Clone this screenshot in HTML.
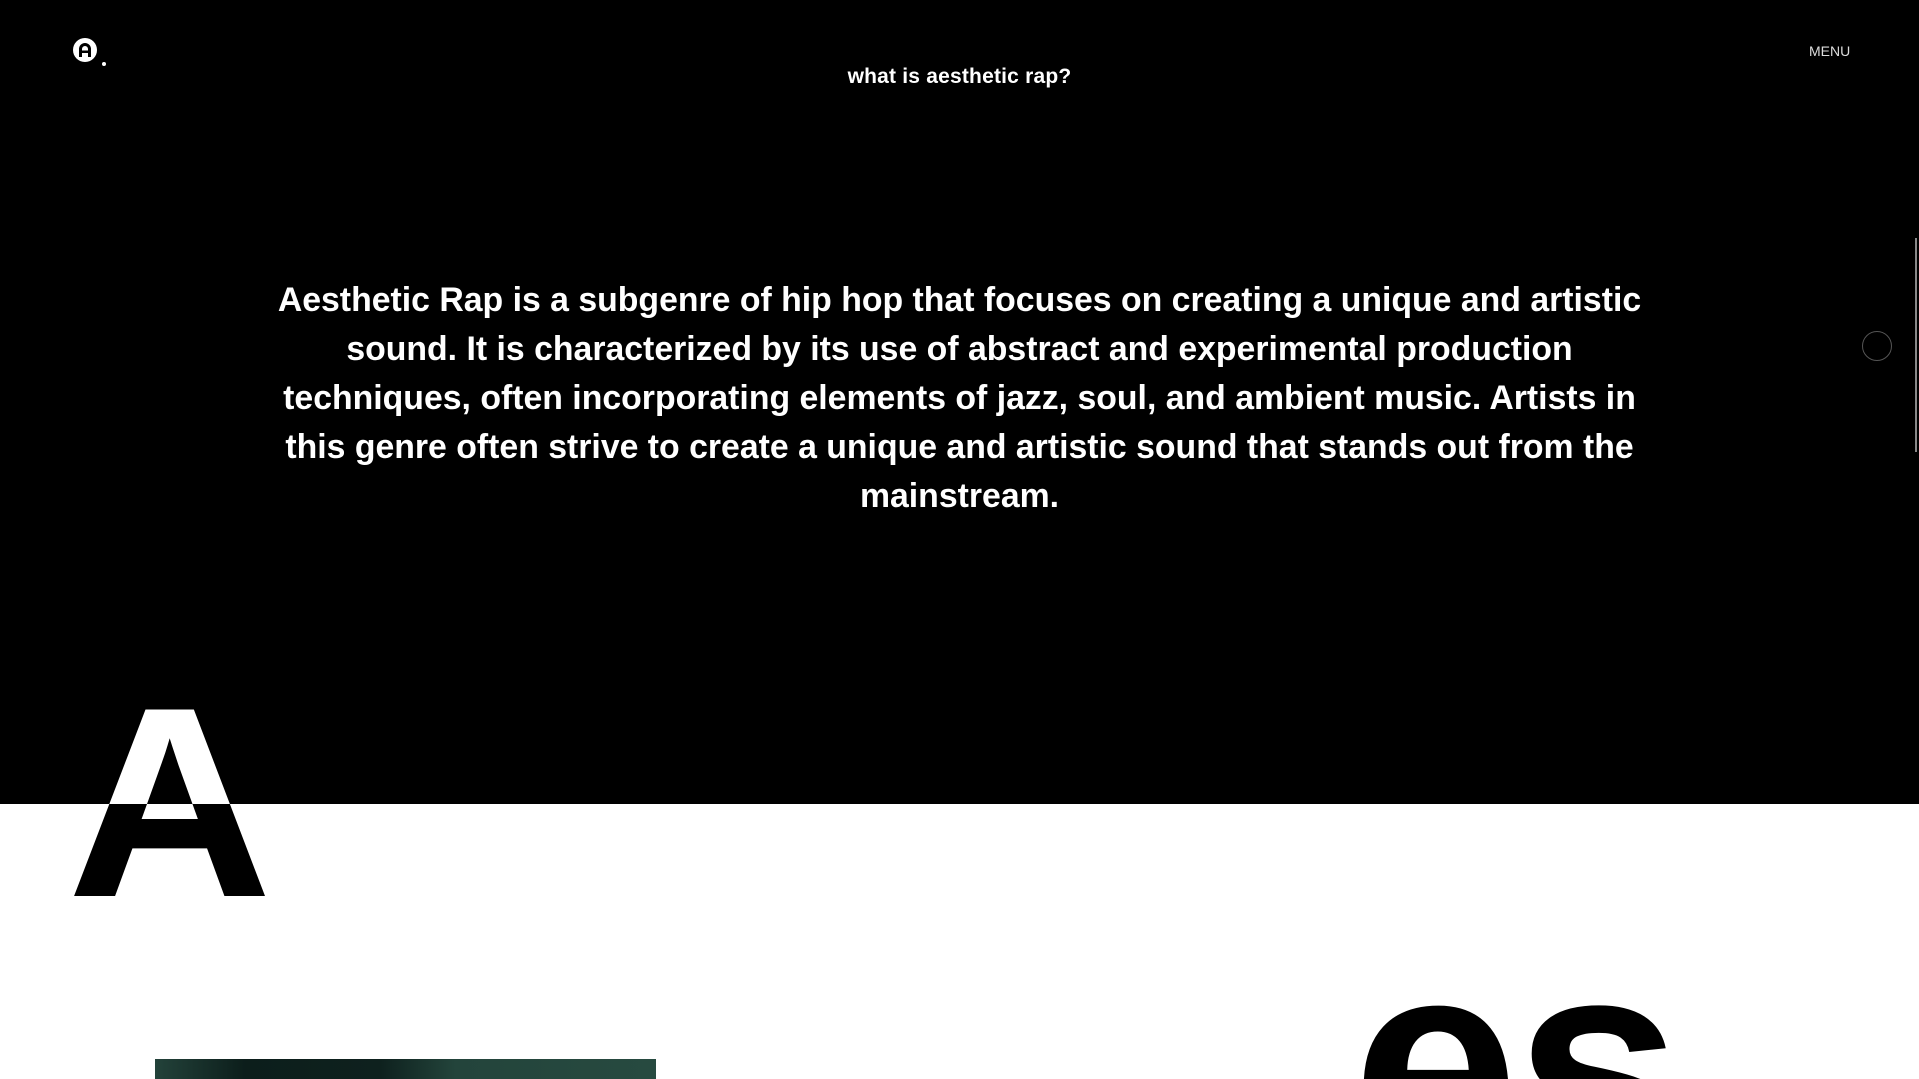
<!DOCTYPE html>
<html><head><meta charset="utf-8"><style>
*{margin:0;padding:0;box-sizing:border-box}
html,body{width:1919px;height:1079px;overflow:hidden;background:#fff;font-family:"Liberation Sans",sans-serif}
.wrap{position:relative;width:1919px;height:1079px;overflow:hidden;background:#fff}
.black{position:absolute;left:0;top:0;width:1919px;height:804px;background:#000}
.logo{position:absolute;left:73px;top:38px}
.title{position:absolute;left:0;width:1919px;top:65px;text-align:center;color:#fff;font-weight:bold;font-size:21px;letter-spacing:0.2px}
.menu{position:absolute;left:1809px;top:43px;color:#ddd;font-size:14px}
.para{position:absolute;left:267px;width:1385px;top:276px;text-align:center;color:#fff;font-weight:bold;font-size:33.8px;line-height:49px;letter-spacing:0}
.ring{position:absolute;left:1862px;top:331px;width:30px;height:30px;border-radius:50%;border:1px solid #555}
.sb{position:absolute;left:1915px;top:238px;width:2px;height:214px;background:#888}
.bigA{position:absolute;left:67px;top:668px;font-size:271px;font-weight:bold;color:#fff;mix-blend-mode:difference;line-height:1;transform:scaleX(1.05);transform-origin:left}
.esclip{position:absolute;left:1300px;top:900px;width:500px;height:179px;overflow:hidden}
.es{position:absolute;left:52px;top:13px;font-size:300px;font-weight:bold;color:#000;line-height:1;letter-spacing:-4px}
.img{position:absolute;left:155px;top:1059px;width:501px;height:20px;background:linear-gradient(90deg,#23423a 0%,#0c1e1b 18%,#0e211e 45%,#23443b 60%,#274a40 100%)}
</style></head><body><div class="wrap">
<div class="black"></div>
<svg class="logo" width="36" height="32" viewBox="0 0 36 32"><circle cx="12" cy="12" r="12" fill="#fff"/><path d="M7.5 19V11a4.5 4.5 0 0 1 9 0v8" fill="none" stroke="#000" stroke-width="3"/><rect x="8" y="12.5" width="8" height="2.5" fill="#000"/><circle cx="31" cy="26" r="2" fill="#fff"/></svg>
<div class="title">what is aesthetic rap?</div>
<div class="menu">MENU</div>
<div class="para">Aesthetic Rap is a subgenre of hip hop that focuses on creating a unique and artistic sound. It is characterized by its use of abstract and experimental production techniques, often incorporating elements of jazz, soul, and ambient music. Artists in this genre often strive to create a unique and artistic sound that stands out from the mainstream.</div>
<div class="ring"></div>
<div class="sb"></div>
<div class="bigA">A</div>
<div class="esclip"><div class="es">es</div></div>
<div class="img"></div>
</div></body></html>
